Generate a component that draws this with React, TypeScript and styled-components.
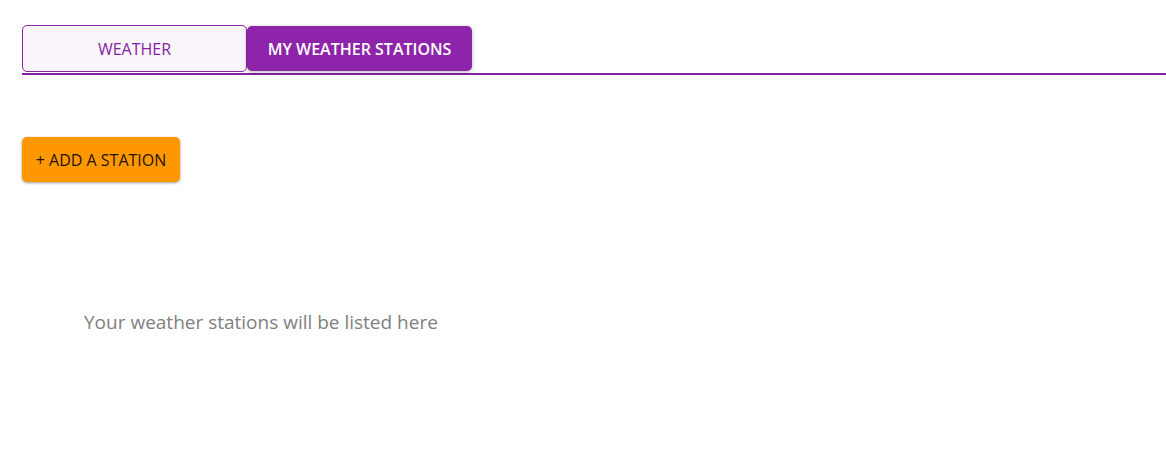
import React from "react";
import styled, { createGlobalStyle, css } from "styled-components";

const GlobalStyle = createGlobalStyle`
  *, *::before, *::after { box-sizing: border-box; }
  body {
    margin: 0;
    background: #ffffff;
    font-family: "Segoe UI", "Open Sans", "Noto Sans", sans-serif;
  }
`;

const Page = styled.main`
  padding: 25px 0 0 22px;
`;

const TabBar = styled.nav`
  display: flex;
  align-items: center;
  padding-bottom: 1px;
  border-bottom: 2px solid #8521a4;
`;

const Button = styled.button`
  font-family: inherit;
  font-size: 16px;
  font-weight: 400;
  line-height: 24px;
  text-transform: uppercase;
  white-space: nowrap;
  border: 0;
  border-radius: 5px;
  cursor: pointer;
`;

const Tab = styled(Button)<{ $active?: boolean }>`
  width: 225px;
  padding: 0;
  ${({ $active }) =>
    $active
      ? css`
          height: 45px;
          color: #ffffff;
          background: #8e24aa;
          font-weight: 600;
          box-shadow: 0 1px 4px rgba(0, 0, 0, 0.3);
        `
      : css`
          height: 47px;
          color: #8521a4;
          background: #fbf6fc;
          border: 1px solid #8e24aa;
        `}
`;

const AddButton = styled(Button)`
  display: block;
  margin-top: 62px;
  width: 158px;
  height: 45px;
  padding: 0;
  color: #1f1300;
  background: #ff9800;
  box-shadow: 0 1px 3px rgba(0, 0, 0, 0.4);
`;

const EmptyMessage = styled.p`
  margin: 125px 0 0;
  padding: 0 62px;
  color: #808080;
  font-size: 19px;
  line-height: 30px;
`;

export default function App() {
  return (
    <>
      <GlobalStyle />
      <Page>
        <TabBar>
          <Tab type="button">Weather</Tab>
          <Tab type="button" $active aria-current="page">My weather stations</Tab>
        </TabBar>
        <AddButton type="button">+ Add a station</AddButton>
        <EmptyMessage>Your weather stations will be listed here</EmptyMessage>
      </Page>
    </>
  );
}
